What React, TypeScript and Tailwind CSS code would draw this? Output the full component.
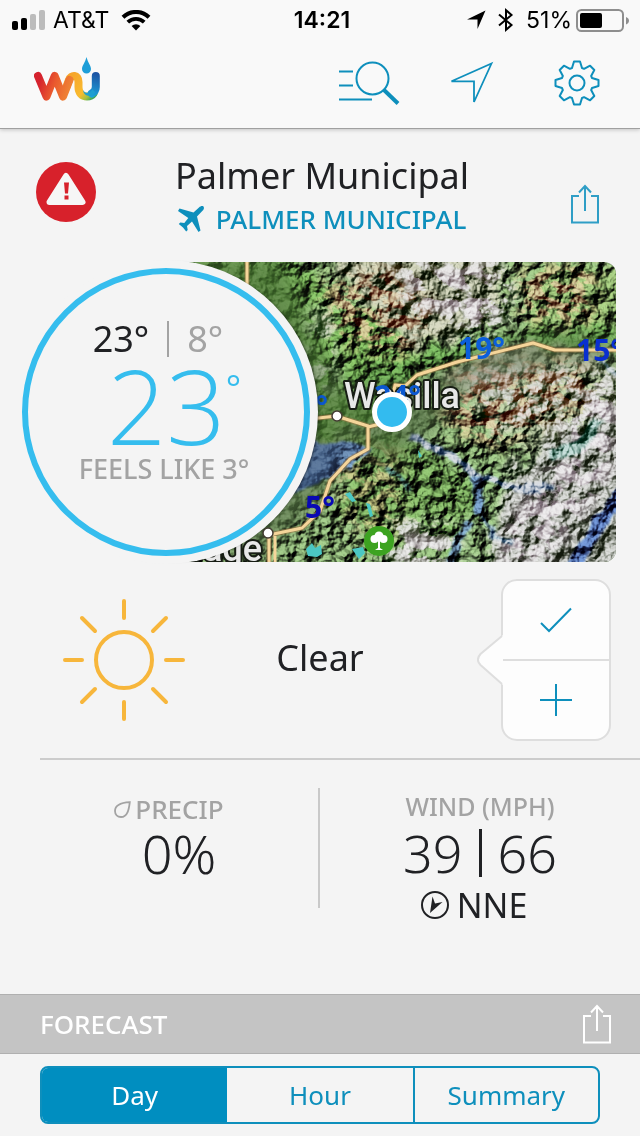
import React from 'react'

const gearPath = (() => {
  const tooth = [[-5, -15], [-3, -21.5], [3, -21.5], [5, -15]]
  const pts: string[] = []
  for (let i = 0; i < 8; i++) {
    const a = (i * Math.PI) / 4
    tooth.forEach(([x, y]) => {
      const px = x * Math.cos(a) - y * Math.sin(a)
      const py = x * Math.sin(a) + y * Math.cos(a)
      pts.push(px.toFixed(2) + ' ' + py.toFixed(2))
    })
  }
  return 'M' + pts.join('L') + 'Z'
})()

function StatusBar() {
  return (
    <div className="grid h-10 grid-cols-3 items-center px-3 font-['Inter','Liberation_Sans',sans-serif] text-[23px] leading-10 text-black">
      <div className="flex items-center gap-2">
        <svg width="33" height="20" viewBox="0 0 33 20" aria-hidden="true">
          <rect x="0" y="11" width="6" height="9" rx="2" />
          <rect x="9" y="8" width="6" height="12" rx="2" />
          <rect x="18" y="4" width="6" height="16" rx="2" fill="#bcbcbc" />
          <rect x="27" y="0" width="6" height="20" rx="2" fill="#bcbcbc" />
        </svg>
        <span>AT&amp;T</span>
        <svg className="ml-1" width="30" height="21" viewBox="0 0 30 21" fill="none" stroke="#000" aria-hidden="true">
          <path d="M2 7.2a18.6 18.6 0 0 1 26 0" strokeWidth="4" />
          <path d="M6.8 12.2a11.8 11.8 0 0 1 16.4 0" strokeWidth="3.8" />
          <path d="M15 20.5l-4.400-4.400a6.200 6.200 0 0 1 8.800 0Z" fill="#000" stroke="none" />
        </svg>
      </div>
      <div className="pl-1 text-center font-semibold">14:21</div>
      <div className="flex items-center justify-end">
        <svg className="mr-3" width="20" height="20" viewBox="0 0 20 20" aria-hidden="true">
          <path d="M19.5.5 11.5 19V9.5H1Z" />
        </svg>
        <svg className="mr-3" width="16" height="24" viewBox="0 0 16 24" fill="none" stroke="#000" strokeWidth="2" aria-hidden="true">
          <path d="M1 6.5 13.5 17 8 21.8V2.2L13.5 7 1 17.5" />
        </svg>
        <span className="mr-1">51%</span>
        <svg className="-mr-[2px]" width="54" height="24" viewBox="0 0 54 24" aria-hidden="true">
          <rect x="1" y="2" width="46" height="21" rx="4.5" fill="none" stroke="#8e8e8e" strokeWidth="2" />
          <rect x="4" y="5" width="22" height="15" rx="2" />
          <path d="M50 9c4 1.500 4 6 0 7.500Z" fill="#8e8e8e" />
        </svg>
      </div>
    </div>
  )
}

function Logo() {
  return (
    <svg width="68" height="46" viewBox="34 56 68 46" fill="none" strokeWidth="8" strokeLinecap="round" strokeLinejoin="round" role="img" aria-label="WU">
      <defs>
        <linearGradient id="warm" gradientUnits="userSpaceOnUse" x1="36" y1="80" x2="72" y2="92">
          <stop offset="0.100" stopColor="#d5232e" />
          <stop offset="0.500" stopColor="#ea5a2e" />
          <stop offset="1" stopColor="#f08a35" />
        </linearGradient>
        <linearGradient id="gold" gradientUnits="userSpaceOnUse" x1="70" y1="76" x2="93" y2="98">
          <stop offset="0" stopColor="#f6a52b" />
          <stop offset="0.650" stopColor="#f9bb2f" />
          <stop offset="0.850" stopColor="#a3c13f" />
          <stop offset="1" stopColor="#3ea75a" />
        </linearGradient>
        <linearGradient id="cool" gradientUnits="userSpaceOnUse" x1="96" y1="74" x2="90" y2="96">
          <stop offset="0" stopColor="#1d55a4" />
          <stop offset="1" stopColor="#1aa3dc" />
        </linearGradient>
      </defs>
      <path d="M66 88 69 80C71 74 78.500 74.500 78.500 82V87c0 6 3.500 9.500 8.500 9.500 3 0 5-.8 6.500-3" stroke="url(#gold)" />
      <path d="M38 76 46.500 96.500 54.700 76 63 96.500 69.500 80" stroke="url(#warm)" />
      <path d="M95.800 76V87c0 3-1.500 5-4 6.500" stroke="url(#cool)" />
      <path d="M83 90c1 2 2.500 2.800 4.500 2.800 2.200 0 4-1 4.800-3.500l3 3c-1.500 3.500-4 4-7 3.500-3-.3-5-2.500-5.300-5.800Z" fill="#1f9fd0" stroke="none" />
      <path d="M86.500 57C88 63 91 65.500 91 69a4.500 4.500 0 0 1-9 0C82 65.500 85 63 86.500 57Z" fill="#1e9ed8" stroke="none" />
    </svg>
  )
}

function ShareIcon() {
  return (
    <svg width="30" height="40" viewBox="0 0 30 40" fill="none" stroke="currentColor" strokeWidth="2" aria-hidden="true">
      <path d="M9 12H2v26.500h26V12h-7M15 27V2.500M9 8.500l6-6.500 6 6.500" />
    </svg>
  )
}

function TopNav() {
  return (
    <nav className="flex h-[89px] items-center border-b border-[#a0a0a0] pb-[2px] pl-[34px] pr-10 text-[#0e8fbc]">
      <a href="#home" aria-label="Home" className="mb-2"><Logo /></a>
      <div className="ml-auto flex items-center gap-12">
        <button aria-label="Search locations">
          <svg width="62" height="46" viewBox="337 60 62 46" fill="none" stroke="currentColor" strokeWidth="2">
            <path d="M338 71.500h14M338 85.500h14M338 99.500h33" />
            <circle cx="371.500" cy="78.500" r="16" />
            <path d="M383 90l14 13.500" strokeWidth="4" />
          </svg>
        </button>
        <button aria-label="Current location">
          <svg width="46" height="46" viewBox="448 60 46 46" fill="none" stroke="currentColor" strokeWidth="1.800">
            <path d="M491.500 63.500 474 102V81.300h-22.500Z" />
          </svg>
        </button>
        <button aria-label="Settings" className="ml-3">
          <svg width="46" height="46" viewBox="-23 -23 46 46" fill="none" stroke="currentColor" strokeWidth="2" strokeLinejoin="round">
            <path d={gearPath} />
            <circle r="7.500" />
          </svg>
        </button>
      </div>
    </nav>
  )
}

function TerrainMap() {
  return (
    <svg className="h-[300px] w-full rounded-r-xl" viewBox="166 262 450 300" preserveAspectRatio="xMaxYMid slice" role="img" aria-label="Map around Wasilla">
      <defs>
        <filter id="rough" x="-10%" y="-10%" width="120%" height="120%" colorInterpolationFilters="sRGB">
          <feTurbulence type="fractalNoise" baseFrequency="0.050" numOctaves="4" seed="4" result="n" />
          <feDisplacementMap in="SourceGraphic" in2="n" scale="44" xChannelSelector="R" yChannelSelector="G" />
          <feGaussianBlur stdDeviation="3" />
        </filter>
        <filter id="river" x="-10%" y="-20%" width="120%" height="140%" colorInterpolationFilters="sRGB">
          <feTurbulence type="fractalNoise" baseFrequency="0.080" numOctaves="3" seed="9" result="n" />
          <feDisplacementMap in="SourceGraphic" in2="n" scale="10" xChannelSelector="R" yChannelSelector="G" />
          <feGaussianBlur stdDeviation="1" />
        </filter>
        <filter id="relief" x="0" y="0" width="100%" height="100%" colorInterpolationFilters="sRGB">
          <feTurbulence type="fractalNoise" baseFrequency="0.060 0.060" numOctaves="4" seed="12" />
          <feColorMatrix values="0 0 0 0 0  0 0 0 0 0  0 0 0 0 0  1 0 0 0 0" />
          <feGaussianBlur stdDeviation="0.500" />
          <feDiffuseLighting surfaceScale="11" diffuseConstant="0.820" lightingColor="#ffffff">
            <feDistantLight azimuth="225" elevation="46" />
          </feDiffuseLighting>
        </filter>
        <filter id="snow" x="0" y="0" width="100%" height="100%" colorInterpolationFilters="sRGB">
          <feTurbulence type="fractalNoise" baseFrequency="0.045 0.060" numOctaves="5" seed="31" />
          <feColorMatrix values="0 0 0 0 0.820  0 0 0 0 0.790  0 0 0 0 0.810  8 0 0 0 -3.400" />
        </filter>
        <filter id="rust" x="0" y="0" width="100%" height="100%" colorInterpolationFilters="sRGB">
          <feTurbulence type="fractalNoise" baseFrequency="0.070 0.110" numOctaves="4" seed="7" />
          <feColorMatrix values="0 0 0 0 0.680  0 0 0 0 0.520  0 0 0 0 0.400  7 0 0 0 -3.000" />
        </filter>
        <filter id="soft"><feGaussianBlur stdDeviation="9" /></filter>
        <mask id="reliefArea" maskUnits="userSpaceOnUse" x="166" y="262" width="450" height="300">
          <rect x="166" y="262" width="450" height="300" fill="#fff" />
          <g fill="#111" filter="url(#soft)">
            <path d="M160 255h120l60 130h80l70-40 70-12 60 10v20h-60l-90 25-40 45-40 30-40-20-30 60-60 50H160Z" />
          </g>
        </mask>
        <mask id="snowArea" maskUnits="userSpaceOnUse" x="166" y="262" width="450" height="300">
          <g fill="#fff" filter="url(#soft)">
            <path d="M395 262h100l18 30-20 50-40-20-40-15Z" />
            <path d="M520 500l30-35 66-50v60l-70 90H490l10-30Z" />
            <path d="M395 520l65 10-10 40h-60Z" />
            <path d="M550 425l70-60v60l-40 30Z" />
            <path d="M310 310l25 0 0 80-20 0Z" opacity="0.600" />
            <path d="M460 360l150 10v40l-120 20Z" opacity="0.400" />
          </g>
        </mask>
        <mask id="rustArea" maskUnits="userSpaceOnUse" x="166" y="262" width="450" height="300">
          <g fill="#fff" filter="url(#soft)">
            <path d="M320 285l70-20 50 45-40 50-60-20Z" />
            <path d="M520 270l80-5-10 60-70-5Z" />
            <path d="M460 370l120-10 20 40-110 50-50-30Z" />
            <path d="M330 450l70 0 0 90-50-10Z" opacity="0.600" />
          </g>
        </mask>
      </defs>
      <rect x="166" y="262" width="450" height="300" fill="#5f7c4e" />
      <g filter="url(#rough)">
        <path d="M150 250h130l70 60 80 50-60 60-80 30H150Z" fill="#4f7a38" />
        <path d="M330 250h160l20 40-60 70-70-30Z" fill="#858c72" />
        <path d="M520 280l110-20v90l-90-5Z" fill="#64824a" />
        <path d="M430 360l100-20 100 25v90L500 440Z" fill="#748463" />
        <path d="M340 380l100-35 80-20 100 5v14l-100-2-90 30-70 35Z" fill="#467334" />
        <path d="M510 470l120-80v190H480Z" fill="#8f948a" />
        <path d="M340 430l70 10 80 50-40 60-110-30Z" fill="#52773d" />
      </g>
      <rect x="166" y="262" width="450" height="300" filter="url(#rust)" mask="url(#rustArea)" opacity="0.800" />
      <rect x="166" y="262" width="450" height="300" filter="url(#snow)" mask="url(#snowArea)" opacity="0.900" />
      <g filter="url(#river)">
        <path d="M280 450l30-7 40 0 22 5-22 20-35 17-25 10Z" fill="#48648a" />
        <path d="M410 436l45 22 20 18 50 13 30-2" fill="none" stroke="#8797ab" strokeWidth="8" />
        <path d="M476 476l4 24-2 16" fill="none" stroke="#466285" strokeWidth="11" />
        <path d="M470 520l-12 20-8 24" fill="none" stroke="#4d6a85" strokeWidth="8" />
        <path d="M482 516l12 22 20 6" fill="none" stroke="#728fa5" strokeWidth="5" />
        <path d="M622 490l-24 38-28 42" fill="none" stroke="#3d5690" strokeWidth="12" />
        <path d="M548 455l32-8 18-28" fill="none" stroke="#759b90" strokeWidth="9" />
        <path d="M600 360l20 18" fill="none" stroke="#9fb0b8" strokeWidth="5" />
        <path d="M386 468l14 10 10 14" fill="none" stroke="#3f6860" strokeWidth="6" />
      </g>
      <g mask="url(#reliefArea)" className="mix-blend-overlay">
        <rect x="166" y="262" width="450" height="300" filter="url(#relief)" />
      </g>
      <rect x="166" y="262" width="450" height="300" filter="url(#relief)" className="mix-blend-soft-light" opacity="0.500" />
      <g fill="#4bc7c3">
        <path d="M345 494l5-2 6 9-4 1ZM366 503l4 1 3 12-3 1ZM306 549l6-6 3 5 6-3 1 9-5 3-9-1ZM352 549l11-2 2 6-6 6ZM418 450l4 6-3 2Z" />
      </g>
      <g fill="none" strokeLinejoin="round">
        <path d="M247 262v30M310 419l26-3 32 10v23l-18 10-20 22-10 30-18 17-33 7v27M368 427l20-5 7-37 10 1 12-11 40-13 76-19 22 7h61" stroke="#9c7848" strokeWidth="5" opacity="0.600" />
        <path d="M247 262v30M310 419l26-3 32 10v23l-18 10-20 22-10 30-18 17-33 7v27M275 536v26M368 427l20-5 7-37 10 1 12-11 40-13 76-19 22 7h61" stroke="#f5d59a" strokeWidth="3" />
      </g>
      <g fill="#fff" stroke="#433c32" strokeWidth="1.500">
        <circle cx="337" cy="416" r="5" />
        <circle cx="268" cy="533" r="5" />
      </g>
      <g fontFamily="Roboto, sans-serif" fontWeight="500" fontSize="36" fill="#e8e8e8" stroke="#171d14" strokeWidth="4" paintOrder="stroke" strokeLinejoin="round">
        <text x="344" y="408">Wasilla</text>
        <text x="262" y="561" textAnchor="end">Anchorage</text>
      </g>
      <g fontFamily="'Noto Sans', sans-serif" fontWeight="700" fontSize="30">
        <text x="458" y="359" fill="#0b5edc">19°</text>
        <text x="576" y="361" fill="#0a2fd0">15°</text>
        <text x="374" y="407" fill="#0b57cf">24°</text>
        <text x="305" y="518" fill="#0909b4">5°</text>
        <text x="328" y="417" fill="#0b57cf" textAnchor="end">21°</text>
      </g>
      <circle cx="379" cy="541" r="15" fill="#3da321" />
      <g fill="#fff">
        <circle cx="379" cy="536" r="4.500" />
        <circle cx="374.500" cy="539" r="4" />
        <circle cx="383.500" cy="539" r="4" />
        <path d="M378 540h2v8l3 2h-8l3-2Z" />
      </g>
      <circle cx="392" cy="412" r="17.500" fill="#33bbef" stroke="#fff" strokeWidth="5" />
    </svg>
  )
}

function Sun() {
  return (
    <svg width="124" height="124" viewBox="-62 -62 124 124" fill="none" stroke="#f7b63b" strokeWidth="4" strokeLinecap="round" aria-hidden="true">
      <circle r="28" />
      <path d="M0-59v17M0 42v17M-59 0h17M42 0h17M-42-42l13 13M42-42l-13 13M-42 42l13-13M42 42l-13-13" />
    </svg>
  )
}

export default function App() {
  return (
    <div className="flex min-h-screen flex-col bg-[#f4f4f4] font-['Noto_Sans',sans-serif] text-[#202124]">
      <header className="bg-[#f9f9f9] shadow-[0_1px_4px_rgba(0,0,0,0.2)]">
        <StatusBar />
        <TopNav />
      </header>

      <main>
        <section className="flex h-[133px] items-center justify-between pb-2 pl-9 pr-10">
          <button aria-label="Severe weather alert" className="w-[60px]">
            <svg width="60" height="60" viewBox="0 0 60 60">
              <circle cx="30" cy="30" r="30" fill="#d7212b" />
              <path d="M30 14 46.500 40h-33Z" fill="#f6f6f6" stroke="#f6f6f6" strokeWidth="6" strokeLinejoin="round" />
              <path d="M28 20.500h5l-1 11h-3ZM28.500 33.500h4v4h-4Z" fill="#d7212b" />
            </svg>
          </button>
          <div className="mt-2 flex flex-col items-center pl-2">
            <h1 className="text-[36px] leading-[46px]">Palmer Municipal</h1>
            <a href="#station" className="flex items-center gap-3 text-[26px] font-medium leading-10 text-[#0e8fbc]">
              <svg width="26" height="26" viewBox="0 0 26 26" fill="currentColor" aria-hidden="true">
                <path d="M25.500.5c1 1.500.2 3-1 4.300L19 10.500l3.500 14-2 1.500-6.500-10.500-5 4.500.7 4-1.500 1.500L5 21.500.8 18l1.500-1.500 4 .5 4-5L0 5l1.500-2.500 14 4L21 1.500C22.500 0 24.500-.4 25.500.5Z" />
              </svg>
              PALMER MUNICIPAL
            </a>
          </div>
          <button aria-label="Share conditions" className="mt-6 flex w-[60px] justify-end text-[#2f9ec6]"><ShareIcon /></button>
        </section>

        <section className="flex h-[300px] items-center pl-[14px] pr-6">
          <div className="z-10 -my-1 shrink-0 rounded-full bg-[#f4f4f4] p-2 shadow-[4px_0_3px_-3px_rgba(0,0,0,0.5)]">
            <div className="flex size-[288px] flex-col items-center rounded-full border-[6px] border-[#35bdee] pt-[42px]">
              <div className="flex items-center gap-[18px] pr-4 text-[36px] leading-[46px]">
                <span>23°</span>
                <span className="h-9 w-[2px] bg-[#a3a3a3]" />
                <span className="text-[#a3a3a3]">8°</span>
              </div>
              <div className="flex items-start pl-4 font-['Open_Sans','Noto_Sans',sans-serif] font-light text-[#35bdee]">
                <span className="text-[104px] leading-[86px]">23</span>
                <span className="text-[36px] leading-[52px] font-normal">°</span>
              </div>
              <p className="pr-1 text-[27px] font-medium leading-[42px] text-[#a3a3a3]">FEELS LIKE 3°</p>
            </div>
          </div>
          <div className="-ml-[152px] min-w-0 flex-1"><TerrainMap /></div>
        </section>

        <section className="grid h-[196px] grid-cols-[186px_1fr_186px] items-center">
          <div className="flex justify-end"><Sun /></div>
          <p className="pb-1 text-center text-[36px] leading-[46px]">Clear</p>
          <div className="relative mr-[29px] ml-auto w-[110px] rounded-2xl border-2 border-[#dedede] bg-[#fdfdfd] text-[#0e8fbc]">
            <button aria-label="Confirm conditions" className="flex h-20 w-full items-center justify-center border-b-2 border-[#dedede]">
              <svg width="32" height="26" viewBox="0 0 32 26" fill="none" stroke="currentColor" strokeWidth="2"><path d="M1 16l8 8L31 1.500" /></svg>
            </button>
            <button aria-label="Add a report" className="flex h-[78px] w-full items-center justify-center">
              <svg width="32" height="32" viewBox="0 0 32 32" fill="none" stroke="currentColor" strokeWidth="2"><path d="M0 16h32M16 0v32" /></svg>
            </button>
            <svg className="absolute -left-[26px] top-[53px]" width="26" height="52" viewBox="0 0 26 52" aria-hidden="true">
              <path d="M26 1 25 2 3.500 20c-3.500 4-3.500 7.500 0 11L25 50l1 1Z" fill="#fdfdfd" />
              <path d="M25 2 3.500 20c-3.500 4-3.500 7.500 0 11L25 50" fill="none" stroke="#dedede" strokeWidth="2" />
            </svg>
          </div>
        </section>

        <section className="ml-10 border-t-2 border-[#cccccc]">
          <div className="-ml-10 grid h-[234px] grid-cols-2 pt-7">
            <div className="flex h-[120px] flex-col items-center border-r-2 border-[#c9c9c9] pl-10">
              <div className="mt-1 flex items-center gap-1 pr-5 text-[26px] font-medium leading-[34px] text-[#a3a3a3]">
                <svg width="17" height="17" viewBox="0 0 17 17" fill="none" stroke="currentColor" strokeWidth="1.800" aria-hidden="true">
                  <path d="M15.800 1.200C11 1.500 1 2.500 1 10c0 3.500 2.500 6 6 6 7 0 8-9 8.800-14.800Z" />
                </svg>
                PRECIP
              </div>
              <p className="font-['Noto_Sans',sans-serif] text-[54px] font-light leading-[54px]">0%</p>
            </div>
            <div className="flex flex-col items-center">
              <p className="text-[25px] font-medium leading-9 text-[#a3a3a3]">WIND (MPH)</p>
              <div className="flex items-center gap-4 font-['Noto_Sans',sans-serif] text-[52px] font-light leading-[58px]">
                <span>39</span>
                <span className="h-12 w-[3px] bg-[#202124]" />
                <span>66</span>
              </div>
              <div className="flex items-center gap-2 pr-3 text-[34px] leading-[46px]">
                <svg width="28" height="28" viewBox="0 0 28 28" aria-hidden="true">
                  <circle cx="14" cy="14" r="13" fill="none" stroke="#202124" strokeWidth="2" />
                  <path d="M9 22 11.500 5.500 14 12.500 21.500 11Z" fill="#202124" />
                </svg>
                NNE
              </div>
            </div>
          </div>
        </section>

        <section>
          <div className="flex h-[60px] items-center justify-between border-y border-[#b0b0b0] bg-[#c4c4c4] pl-10 pr-7 text-white">
            <h2 className="text-[26px] font-medium">FORECAST</h2>
            <button aria-label="Share forecast"><ShareIcon /></button>
          </div>
          <div className="mx-10 mt-3 mb-3 grid h-[58px] grid-cols-3 overflow-hidden rounded-lg border-2 border-[#0e8fbc] text-[26px] text-[#0e8fbc]">
            <button className="bg-[#008ec0] text-white">Day</button>
            <button>Hour</button>
            <button className="border-l-2 border-[#0e8fbc]">Summary</button>
          </div>
        </section>
      </main>
    </div>
  )
}
